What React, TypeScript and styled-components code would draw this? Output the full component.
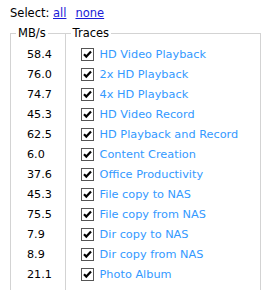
import styled, { createGlobalStyle } from 'styled-components';

const GlobalStyle = createGlobalStyle`
  html, body {
    margin: 0;
    padding: 0;
    background: #fff;
  }
  body {
    padding: 6px 10px 0;
    font-family: "DejaVu Sans", Verdana, sans-serif;
    font-size: 11px;
    color: #000;
  }
`;

const traces: [string, string][] = [
  ['58.4', 'HD Video Playback'],
  ['76.0', '2x HD Playback'],
  ['74.7', '4x HD Playback'],
  ['45.3', 'HD Video Record'],
  ['62.5', 'HD Playback and Record'],
  ['6.0', 'Content Creation'],
  ['37.6', 'Office Productivity'],
  ['45.3', 'File copy to NAS'],
  ['75.5', 'File copy from NAS'],
  ['7.9', 'Dir copy to NAS'],
  ['8.9', 'Dir copy from NAS'],
  ['21.1', 'Photo Album'],
];

function CheckBox() {
  return (
    <Box>
      <svg width="11" height="11" viewBox="0 0 11 11">
        <path d="M2 5.2 L4.3 7.6 L9 2.6" fill="none" stroke="#000" strokeWidth="2.2" />
      </svg>
    </Box>
  );
}

function App() {
  return (
    <>
      <GlobalStyle />
      <SelectBar>
        Select: <Link href="#">all</Link>
        <Link href="#" $gap>none</Link>
      </SelectBar>
      <Panels>
        <Group $width={56}>
          <Legend>MB/s</Legend>
          <List $padLeft={16}>
            {traces.map(([speed], i) => (
              <Row key={i}>{speed}</Row>
            ))}
          </List>
        </Group>
        <Group $width={198} $joined>
          <Legend>Traces</Legend>
          <List $padLeft={15}>
            {traces.map(([, name], i) => (
              <Row key={i}>
                <CheckBox />
                <TraceName>{name}</TraceName>
              </Row>
            ))}
          </List>
        </Group>
      </Panels>
    </>
  );
}

const SelectBar = styled.div`
  height: 15px;
  line-height: 15px;
  font-size: 11.5px;
  white-space: pre;
`;

const Link = styled.a<{ $gap?: boolean }>`
  color: #1a1ad8;
  text-decoration: underline;
  margin-left: ${(p) => (p.$gap ? 9 : 0)}px;
`;

const Panels = styled.div`
  display: flex;
  margin-top: 5px;
`;

const Group = styled.fieldset<{ $width: number; $joined?: boolean }>`
  box-sizing: border-box;
  width: ${(p) => p.$width}px;
  min-width: 0;
  margin: 0 0 0 ${(p) => (p.$joined ? -1 : 0)}px;
  padding: 0 0 10px;
  border: 1px solid #d3d3d3;
  min-height: 290px;
`;

const Legend = styled.legend`
  padding: 0 2px;
  margin-left: 5px;
  font-size: 11.5px;
  line-height: 15px;
`;

const List = styled.div<{ $padLeft: number }>`
  padding: 3px 0 0 ${(p) => p.$padLeft}px;
`;

const Row = styled.div`
  height: 20px;
  display: flex;
  align-items: center;
  font-size: 11.2px;
  white-space: nowrap;
`;

const Box = styled.span`
  box-sizing: border-box;
  width: 13px;
  height: 13px;
  border: 1px solid #555;
  background: #fff;
  display: flex;
  align-items: center;
  justify-content: center;
  margin-right: 6px;
  flex: none;
`;

const TraceName = styled.span`
  color: #3399ff;
  font-size: 11.3px;
`;

export default App;
